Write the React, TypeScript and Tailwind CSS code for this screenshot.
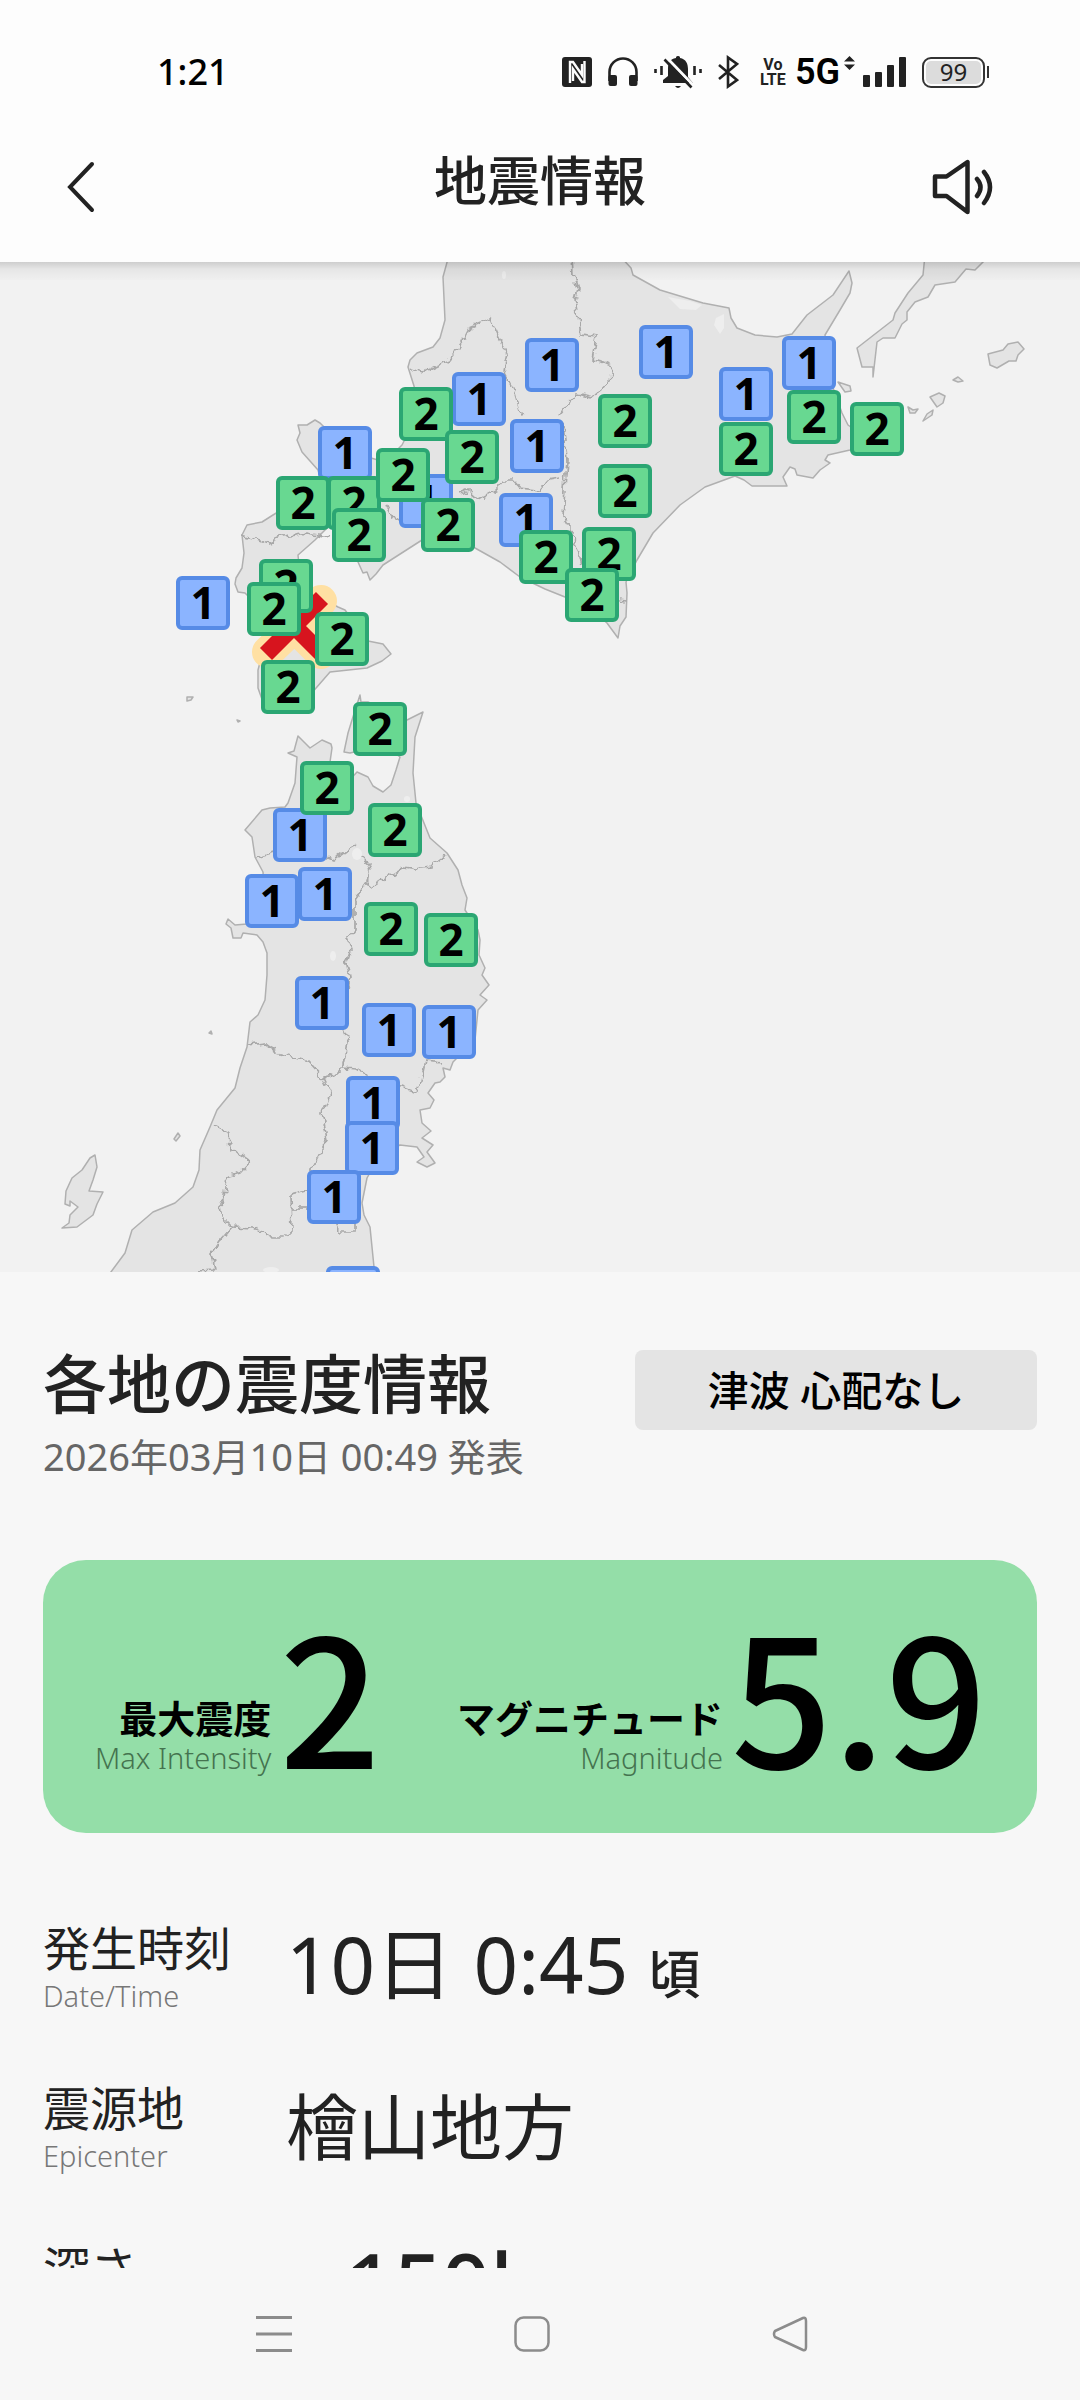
import type { ReactNode } from 'react'

type Pin = { x: number; y: number; level: 1 | 2 }

const pins: Pin[] = [
  { x: 552, y: 365, level: 1 },
  { x: 479, y: 399, level: 1 },
  { x: 345, y: 453, level: 1 },
  { x: 537, y: 446, level: 1 },
  { x: 426, y: 501, level: 1 },
  { x: 526, y: 520, level: 1 },
  { x: 666, y: 352, level: 1 },
  { x: 809, y: 363, level: 1 },
  { x: 746, y: 394, level: 1 },
  { x: 203, y: 603, level: 1 },
  { x: 300, y: 835, level: 1 },
  { x: 272, y: 901, level: 1 },
  { x: 325, y: 894, level: 1 },
  { x: 322, y: 1003, level: 1 },
  { x: 389, y: 1030, level: 1 },
  { x: 449, y: 1032, level: 1 },
  { x: 373, y: 1103, level: 1 },
  { x: 372, y: 1148, level: 1 },
  { x: 334, y: 1197, level: 1 },
  { x: 353, y: 1293, level: 1 },
  { x: 426, y: 414, level: 2 },
  { x: 472, y: 457, level: 2 },
  { x: 354, y: 503, level: 2 },
  { x: 403, y: 475, level: 2 },
  { x: 303, y: 503, level: 2 },
  { x: 359, y: 535, level: 2 },
  { x: 448, y: 525, level: 2 },
  { x: 546, y: 557, level: 2 },
  { x: 609, y: 554, level: 2 },
  { x: 592, y: 595, level: 2 },
  { x: 625, y: 421, level: 2 },
  { x: 625, y: 491, level: 2 },
  { x: 746, y: 449, level: 2 },
  { x: 814, y: 417, level: 2 },
  { x: 877, y: 429, level: 2 },
  { x: 286, y: 586, level: 2 },
  { x: 274, y: 609, level: 2 },
  { x: 342, y: 639, level: 2 },
  { x: 288, y: 687, level: 2 },
  { x: 380, y: 729, level: 2 },
  { x: 327, y: 788, level: 2 },
  { x: 395, y: 830, level: 2 },
  { x: 391, y: 929, level: 2 },
  { x: 451, y: 940, level: 2 },
]

const land = [
  // Hokkaido
  'M449 255 443 277 445 320 440 338 433 347 417 353 410 360 408 367 414 386 420 410 402 445 385 462 350 452 320 423 315 420 307 425 298 425 300 433 297 440 302 452 318 470 322 485 273 515 262 522 247 525 242 535 244 553 242 568 236 578 235 584 238 592 245 593 262 610 266 640 258 670 258 688 264 705 290 712 310 695 330 672 367 668 382 661 391 654 383 644 368 641 345 610 338 607 325 600 300 575 298 555 315 540 335 520 358 562 363 573 367 572 370 580 376 574 383 565 422 540 450 530 475 548 500 562 520 577 545 589 585 605 607 623 618 638 620 626 626 617 627 593 626 582 637 560 653 533 680 505 705 487 735 476 744 480 752 486 787 486 783 477 790 467 795 469 797 475 813 478 820 470 830 463 825 460 828 455 850 450 880 440 870 425 855 430 848 425 842 413 832 385 825 335 840 310 850 293 852 283 849 271 833 295 807 315 792 334 777 337 755 335 737 328 731 318 729 308 703 303 660 290 633 275 631 268 619 255Z',
  // Kunashiri
  'M925 255 923 275 908 293 895 313 893 320 857 348 862 367 873 367 873 377 877 342 883 338 895 338 902 324 907 320 907 312 915 302 928 297 935 285 955 282 966 269 975 270 985 260Z',
  'M988 354 990 365 997 368 1009 361 1016 361 1018 355 1024 349 1018 342 1008 344 1003 350Z',
  'M930 397 939 393 945 396 943 403 937 407Z',
  'M953 380 958 377 963 381 958 382Z',
  'M908 407 913 410 918 409 915 413 910 413Z',
  'M923 421 927 414 933 410 932 415Z',
  'M838 382 850 386 851 391 845 392Z',
  // Honshu
  'M360 695 361 702 368 702 407 720 423 712 415 737 413 773 416 803 430 838 447 853 458 870 462 885 467 898 465 910 478 930 480 940 479 955 485 968 482 975 489 985 480 995 487 1000 478 1010 475 1040 453 1062 450 1070 443 1068 445 1077 440 1082 435 1083 428 1093 434 1100 430 1108 420 1110 422 1123 431 1131 422 1138 433 1145 427 1152 435 1163 427 1167 417 1162 424 1157 417 1147 400 1145 380 1155 367 1178 362 1203 364 1215 370 1227 374 1267 374 1280 105 1280 125 1253 132 1230 153 1212 175 1203 193 1187 199 1170 200 1150 210 1127 217 1110 235 1088 240 1068 247 1047 250 1022 258 1015 265 1000 267 975 267 953 263 942 257 935 243 933 241 938 233 938 231 928 226 924 228 919 235 925 247 924 265 905 263 872 255 857 252 837 245 830 262 810 270 808 285 807 288 803 295 783 297 757 288 753 294 751 298 736 303 741 310 748 322 740 331 744 332 748 330 762 345 785 357 772 368 777 373 786 383 792 391 785 396 770 400 757 385 745 350 753 344 752 348 733 352 720Z',
  // Sado
  'M95 1155 90 1158 82 1170 72 1178 66 1191 65 1204 70 1206 70 1201 78 1207 70 1215 69 1223 62 1228 77 1227 93 1215 97 1204 103 1192 89 1191 93 1180 97 1167Z',
  'M174 1139 178 1133 180 1136 176 1141Z',
  'M209 1033 211 1031 212 1034Z',
  'M187 697 193 697 191 700 187 701Z',
  'M237 720 240 721 238 722Z',
]

const borders = [
  'M572 255 573 275 578 290 575 300 581 335 597 337 593 360 603 362 612 366 610 380 602 390 593 397 577 393 568 403 558 415',
  'M408 367 423 372 440 364 450 360 462 343 470 327 482 322 490 317 497 334 507 353 503 370 515 393 522 417',
  'M563 423 567 460 563 517 570 528 578 547 582 565',
  'M460 493 467 490 478 500 496 490 505 480 513 480 520 488 540 490 548 480 560 478',
  'M242 535 260 540 268 543 282 537 307 533 330 537',
  'M386 505 395 522 400 520',
  'M619 600 627 601',
  'M255 857 272 852 290 856 328 858 333 860 347 850 358 844',
  'M360 856 368 863 370 872 367 883 355 900 355 930 347 940 351 950 347 963 350 977 346 1000 344 1030 348 1040 346 1055 343 1067 335 1075 323 1078 308 1062 292 1057 278 1053 265 1043 248 1045',
  'M367 883 372 887 385 878 403 867 415 869 430 867 447 855',
  'M343 1067 355 1068 367 1075 385 1085 402 1087 418 1093 425 1062 440 1064',
  'M323 1078 330 1093 322 1113 327 1138 320 1152 312 1168 310 1190 291 1195 292 1232 285 1238 273 1238 255 1228 232 1227 222 1217 220 1205 225 1195 227 1177 240 1173 250 1162 240 1155 230 1150 229 1133 212 1125',
  'M232 1227 221 1240 212 1253 215 1270 195 1271',
  'M291 1208 307 1208',
  'M335 1220 338 1232 355 1232 355 1220',
]

function IntensityMap() {
  return (
    <svg viewBox="0 262 1080 1010" className="block w-full bg-[#f2f2f2]" role="img" aria-label="震度分布図">
      <defs>
        <filter id="rough" x="0" y="0" width="1" height="1">
          <feTurbulence type="fractalNoise" baseFrequency="0.12" numOctaves="2" seed="4" />
          <feDisplacementMap in="SourceGraphic" scale="10" xChannelSelector="R" yChannelSelector="G" />
        </filter>
        <linearGradient id="shade" x1="0" y1="0" x2="0" y2="1">
          <stop offset="0" stopColor="#000" stopOpacity="0.15" />
          <stop offset="0.4" stopColor="#000" stopOpacity="0.05" />
          <stop offset="1" stopColor="#000" stopOpacity="0.01" />
        </linearGradient>
      </defs>
      <g fill="#e4e4e4" stroke="#b0b0b0" strokeWidth="1.5" strokeLinejoin="round">
        {land.map((d) => (
          <path key={d} d={d} />
        ))}
      </g>
      <g filter="url(#rough)" fill="none" stroke="#a8a8a8" strokeWidth="1.7">
        <rect x="0" y="262" width="1080" height="1010" stroke="none" />
        {borders.map((d) => (
          <path key={d} d={d} />
        ))}
      </g>
      {/* Lakes */}
      <g fill="#eeeeee">
        <ellipse cx="504" cy="275" rx="2" ry="4" />
        <path d="M668 297 690 301 702 305 696 310 680 309Z" />
        <path d="M716 318 724 314 724 328 720 334 714 325Z" />
        <ellipse cx="357" cy="854" rx="5" ry="6" />
        <ellipse cx="333" cy="956" rx="3" ry="5" />
        <ellipse cx="407" cy="799" rx="3" ry="3" />
        <ellipse cx="271" cy="1270" rx="8" ry="3" />
      </g>
      {/* Epicenter */}
      <path d="M268 652 321 601M268 600 321 653" stroke="#ffe0a3" strokeWidth="32" strokeLinecap="round" />
      <path d="M266 654 322 598M266 598 322 654" stroke="#d7141e" strokeWidth="17" />
      {pins.map(({ x, y, level }) => (
        <g key={`${x}-${y}`}>
          <rect
            x={x - 25}
            y={y - 25}
            width="50"
            height="50"
            rx="4"
            strokeWidth="4"
            className={level === 2 ? 'fill-[#68d891] stroke-[#2ba673]' : 'fill-[#8bb4ff] stroke-[#568be6]'}
          />
          <text x={x} y={y + 16} textAnchor="middle" className="text-[44px] font-bold">
            {level}
          </text>
        </g>
      ))}
      <rect x="0" y="262" width="1080" height="18" fill="url(#shade)" />
    </svg>
  )
}

function StatusBar() {
  return (
    <div className="flex h-28 items-center justify-between pt-8 pr-[91px] pl-[157px] text-[#222]">
      <span className="text-[36px] leading-10 font-medium text-black">1:21</span>
      <div className="flex items-center gap-4">
        <svg width="30" height="30" viewBox="0 0 30 30" aria-label="NFC">
          <rect width="30" height="30" rx="3" fill="currentColor" />
          <path d="M8 26V5h3l9 13V7" fill="none" stroke="#fdfdfd" strokeWidth="2.4" />
          <path d="M22.500 4v21h-2.500L11 12v12" fill="none" stroke="#fdfdfd" strokeWidth="2.4" />
        </svg>
        <svg width="30" height="30" viewBox="0 0 30 30" aria-label="ヘッドホン">
          <path d="M1.500 24V15a13.500 13.500 0 0 1 27 0v9" fill="none" stroke="currentColor" strokeWidth="2.600" />
          <rect x="0.500" y="18" width="8.500" height="11" rx="2" fill="currentColor" />
          <rect x="21" y="18" width="8.500" height="11" rx="2" fill="currentColor" />
        </svg>
        <svg width="48" height="34" viewBox="0 0 48 34" aria-label="ミュート">
          <path d="M24 1c2 0 2 1 2 2 6 1 8 6 8 11v8l5 6H9v-3l5-4v-7C14 8 16 4 22 3c0-1 0-2 2-2z" fill="currentColor" />
          <path d="M21 31h6q-3 4-6 0z" fill="currentColor" />
          <path d="M1.500 14v4M7.500 11v9M40.500 11v9M46.500 14v4" stroke="currentColor" strokeWidth="2.600" />
          <path d="M13 3l27 28" stroke="#fdfdfd" strokeWidth="3" />
          <path d="M10.500 4.500 37.500 32.500" stroke="currentColor" strokeWidth="2.600" />
        </svg>
        <svg width="21" height="34" viewBox="0 0 21 34" aria-label="Bluetooth">
          <path d="M1 10 19 25l-9 6.500V2.500l9 6.500L1 24" fill="none" stroke="currentColor" strokeWidth="2.600" />
        </svg>
        <div className="ml-1 flex items-center gap-2">
          <span className="flex w-7 flex-col items-center font-['Roboto'] text-[16px] leading-[15px] font-bold">
            <span>Vo</span>
            <span>LTE</span>
          </span>
          <div className="flex items-start gap-1">
            <span className="font-['Roboto'] text-[36px] leading-8 font-semibold text-black">5G</span>
            <svg width="11" height="14" viewBox="0 0 11 14" fill="currentColor" aria-hidden="true">
              <path d="M5.500 0 11 5.500H0zM5.500 14 0 8.500h11z" />
            </svg>
          </div>
          <svg width="43" height="30" viewBox="0 0 43 30" fill="currentColor" aria-label="電波強度">
            <rect y="18" width="7" height="12" rx="1" />
            <rect x="12" y="15" width="7" height="15" rx="1" />
            <rect x="24" y="8" width="7" height="22" rx="1" />
            <rect x="36" width="7" height="30" rx="1" />
          </svg>
        </div>
        <div className="flex items-center gap-[2px]">
          <span className="flex h-[31px] w-[63px] items-center justify-center rounded-[9px] border-2 border-[#333] bg-[#fdfdfd] p-[2px]">
            <span className="flex h-full w-full items-center justify-center rounded-[5px] bg-[#dcdcdc] text-[24px] leading-6">
              99
            </span>
          </span>
          <span className="h-3 w-[2px] bg-[#333]" />
        </div>
      </div>
    </div>
  )
}

function Header() {
  return (
    <header className="flex h-[150px] items-center justify-between px-[58px] text-[#222]">
      <button aria-label="戻る" className="flex w-[90px] justify-start">
        <svg width="48" height="56" viewBox="0 0 48 56" fill="none" stroke="currentColor" strokeWidth="4" strokeLinecap="round">
          <path d="M34 5 12 28l22 23" />
        </svg>
      </button>
      <h1 className="pb-3 text-[53px] leading-[60px] font-medium">地震情報</h1>
      <button aria-label="読み上げ" className="flex w-[90px] justify-start">
        <svg width="64" height="58" viewBox="0 0 64 58" fill="none" stroke="currentColor" strokeWidth="4.500">
          <path d="M3 18.500h11.500L35.500 4v50L14.500 38H3z" strokeLinejoin="round" />
          <path d="M45 21q7 8 0 17M52 14q12 15 0 31" strokeLinecap="round" />
        </svg>
      </button>
    </header>
  )
}

function Stat({ label, en, value }: { label: string; en: string; value: string }) {
  return (
    <div className="flex items-end gap-2">
      <div className="text-right">
        <div className="text-[38px] leading-[44px] font-bold">{label}</div>
        <div className="text-[29px] leading-9 font-light text-[#44734f]">{en}</div>
      </div>
      <div className="font-['Noto_Sans_CJK_JP',sans-serif] text-[178px] leading-[168px] font-medium">{value}</div>
    </div>
  )
}

function Row({ label, en, children }: { label: string; en: string; children: ReactNode }) {
  return (
    <div className="grid grid-cols-[243px_1fr] items-end">
      <dt>
        <div className="text-[47px] leading-[60px]">{label}</div>
        <div className="text-[29px] leading-9 font-light text-[#777]">{en}</div>
      </dt>
      <dd className="flex items-baseline leading-[80px] whitespace-nowrap">{children}</dd>
    </div>
  )
}

function App() {
  return (
    <div
      lang="ja"
      className="flex h-screen flex-col overflow-hidden bg-[#f7f7f7] font-['Noto_Sans','Noto_Sans_CJK_JP',sans-serif] text-[#222]"
    >
      <div className="shrink-0 bg-[#fdfdfd]">
        <StatusBar />
        <Header />
      </div>

      <main className="min-h-0 flex-1 overflow-hidden">
        <IntensityMap />

        <section className="px-[43px] pt-[76px]">
          <div className="flex items-start justify-between">
            <div>
              <h2 className="text-[64px] leading-[72px] font-medium">各地の震度情報</h2>
              <p className="mt-3 text-[38px] leading-[48px] text-[#666]">2026年03月10日 00:49 発表</p>
            </div>
            <div className="mt-[2px] w-[402px] rounded-lg bg-[#e4e4e4] text-center text-[41px] leading-[80px] font-medium text-black">
              津波 心配なし
            </div>
          </div>

          <div className="mt-20 flex justify-between rounded-[43px] bg-[#94dea8] pt-12 pr-[50px] pb-[57px] pl-[52px] text-black">
            <Stat label="最大震度" en="Max Intensity" value="2" />
            <Stat label="マグニチュード" en="Magnitude" value="5.9" />
          </div>

          <dl className="mt-[85px] flex flex-col gap-16">
            <Row label="発生時刻" en="Date/Time">
              <span className="text-[78px]">10日 0:45</span>
              <span className="ml-5 text-[52px] font-medium">頃</span>
            </Row>
            <Row label="震源地" en="Epicenter">
              <span className="pb-2 text-[72px]">檜山地方</span>
            </Row>
            <Row label="深さ" en="Depth">
              <span className="mr-2 text-[52px] font-medium">約</span>
              <span className="text-[84px] font-medium">150km</span>
            </Row>
          </dl>
        </section>
      </main>

      <nav className="flex h-[132px] shrink-0 items-center justify-center gap-[222px] pr-4 text-[#8c8c8c]">
        <button aria-label="履歴">
          <svg width="36" height="36" viewBox="0 0 36 36" stroke="currentColor" strokeWidth="3">
            <path d="M0 1.500h36M0 18h36M0 34.500h36" />
          </svg>
        </button>
        <button aria-label="ホーム">
          <svg width="36" height="36" viewBox="0 0 36 36" fill="none" stroke="currentColor" strokeWidth="2.500">
            <rect x="1.500" y="1.500" width="33" height="33" rx="8" />
          </svg>
        </button>
        <button aria-label="戻る">
          <svg width="36" height="36" viewBox="0 0 36 36" fill="none" stroke="currentColor" strokeWidth="2.500" strokeLinejoin="round">
            <path d="M31 2 3 15q-2 3 0 6l28 13q3 1 3-3V5q0-4-3-3z" />
          </svg>
        </button>
      </nav>
    </div>
  )
}

export default App
